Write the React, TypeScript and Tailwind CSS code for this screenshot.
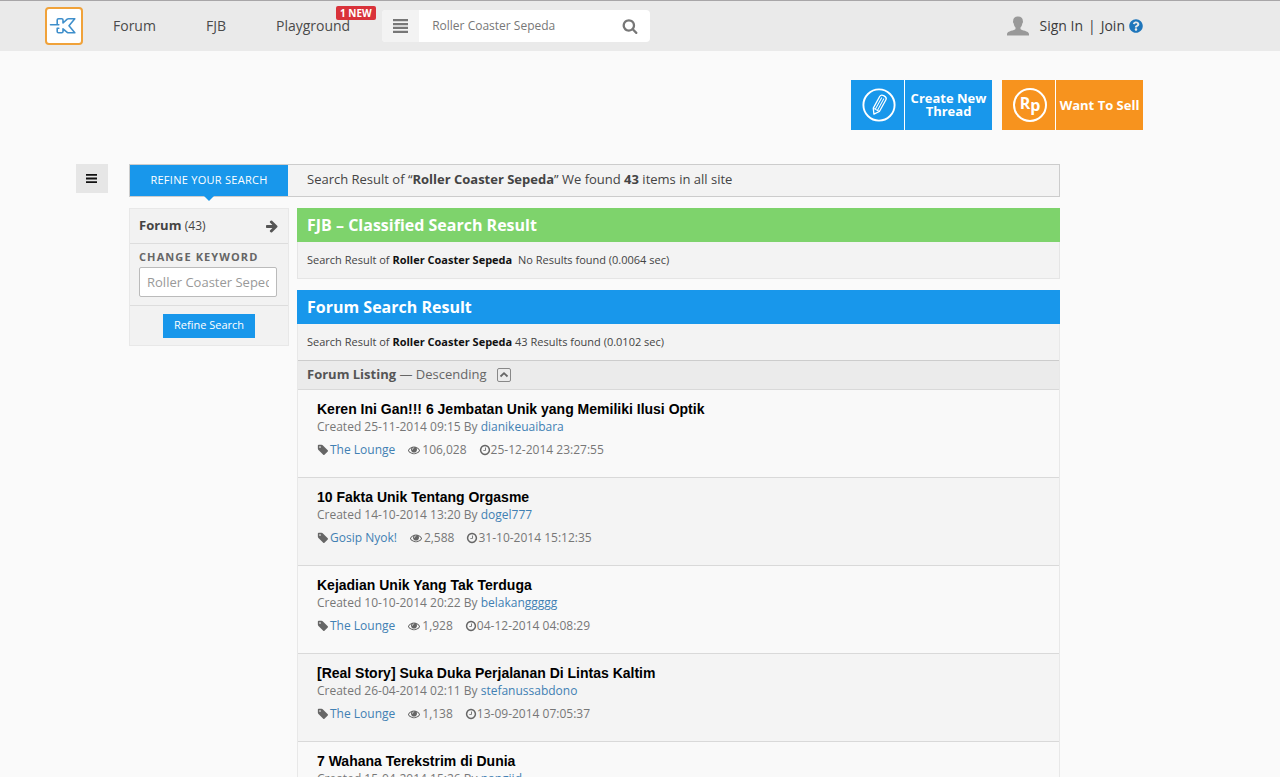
import React from "react";
import { FaQuestionCircle } from "react-icons/fa";

type IconProps = { d: string; className?: string };

function Glyph({ d, className }: IconProps) {
  return (
    <svg viewBox="0 0 1792 1792" fill="currentColor" aria-hidden="true" className={className}>
      <path d={d} />
    </svg>
  );
}

const EYE =
  "M1664 960q-152-236-381-353 61 104 61 225 0 185-131.5 316.5t-316.5 131.5-316.5-131.5-131.5-316.5q0-121 61-225-229 117-381 353 133 205 333.5 326.5t434.5 121.5 434.5-121.5 333.5-326.5zm-720-384q0-20-14-34t-34-14q-125 0-214.5 89.5t-89.5 214.5q0 20 14 34t34 14 34-14 14-34q0-86 61-147t147-61q20 0 34-14t14-34zm848 384q0 34-20 69-140 230-376.5 368.5t-499.5 138.5-499.5-139-376.5-368q-20-35-20-69t20-69q140-229 376.5-368t499.5-139 499.5 139 376.5 368q20 35 20 69z";
const CLOCK =
  "M1024 544v448q0 14-9 23t-23 9h-320q-14 0-23-9t-9-23v-64q0-14 9-23t23-9h224v-352q0-14 9-23t23-9h64q14 0 23 9t9 23zm416 352q0-148-73-273t-198-198-273-73-273 73-198 198-73 273 73 273 198 198 273 73 273-73 198-198 73-273zm224 0q0 209-103 385.5t-279.5 279.5-385.5 103-385.5-103-279.5-279.5-103-385.5 103-385.5 279.5-279.5 385.5-103 385.5 103 279.5 279.5 103 385.5z";
const TAG =
  "M576 448q0-53-37.5-90.5t-90.5-37.5-90.5 37.5-37.5 90.5 37.5 90.5 90.5 37.5 90.5-37.5 37.5-90.5zm1067 576q0 53-37 90l-491 492q-39 37-91 37-53 0-90-37l-715-716q-38-37-64.5-101t-26.5-117v-416q0-52 38-90t90-38h416q53 0 117 26.5t102 64.5l715 714q37 39 37 91z";
const ARROW =
  "M1600 960q0 54-37 91l-651 651q-39 37-91 37-51 0-90-37l-75-75q-38-38-38-91t38-91l293-293h-704q-52 0-84.5-37.5t-32.5-90.5v-128q0-53 32.5-90.5t84.5-37.5h704l-293-294q-38-36-38-90t38-90l75-75q38-38 90-38 53 0 91 38l651 651q37 35 37 90z";
const SEARCH =
  "M1216 832q0-185-131.5-316.5t-316.5-131.5-316.5 131.5-131.5 316.5 131.5 316.5 316.5 131.5 316.5-131.5 131.5-316.5zm512 832q0 52-38 90t-90 38q-54 0-90-38l-343-342q-179 124-399 124-143 0-273.5-55.5t-225-150-150-225-55.5-273.5 55.5-273.5 150-225 225-150 273.5-55.5 273.5 55.5 225 150 150 225 55.5 273.5q0 220-124 399l343 343q37 37 37 90z";

const threads = [
  { title: "Keren Ini Gan!!! 6 Jembatan Unik yang Memiliki Ilusi Optik", created: "25-11-2014 09:15", author: "dianikeuaibara", forum: "The Lounge", views: "106,028", last: "25-12-2014 23:27:55" },
  { title: "10 Fakta Unik Tentang Orgasme", created: "14-10-2014 13:20", author: "dogel777", forum: "Gosip Nyok!", views: "2,588", last: "31-10-2014 15:12:35" },
  { title: "Kejadian Unik Yang Tak Terduga", created: "10-10-2014 20:22", author: "belakanggggg", forum: "The Lounge", views: "1,928", last: "04-12-2014 04:08:29" },
  { title: "[Real Story] Suka Duka Perjalanan Di Lintas Kaltim", created: "26-04-2014 02:11", author: "stefanussabdono", forum: "The Lounge", views: "1,138", last: "13-09-2014 07:05:37" },
  { title: "7 Wahana Terekstrim di Dunia", created: "15-04-2014 15:26", author: "nangijd", forum: "The Lounge", views: "1,024", last: "20-08-2014 10:12:44" },
];

function Header() {
  return (
    <header className="flex h-[51px] items-center border-t border-[#a8a6a8] bg-[#eaeaea] pl-[45px] text-sm font-medium text-[#4a4a4a]">
      <a href="#home" aria-label="Home" className="flex size-[38px] shrink-0 items-center justify-center rounded border-2 border-[#f0a23a] bg-white">
        <svg viewBox="0 0 30 22" className="h-[22px] w-[30px]" fill="none" stroke="#3f8fcb" strokeWidth="1.6" strokeLinejoin="round" strokeLinecap="round" aria-hidden="true">
          <path d="M1.500 9.800H9.800M8.200 9.800V5Q8.200 3.700 9.500 3.700H12.700Q14 3.700 14 5V8L18.200 4.200Q18.800 3.700 19.500 3.700H25.800L20 10.800L25.800 17.800H19.500Q18.800 17.800 18.200 17.300L14 13.800V16.500Q14 17.800 12.700 17.800H9.500Q8.200 17.800 8.200 16.500V13.300H9.800" />
        </svg>
      </a>
      <nav className="flex items-center">
        <a href="#forum" className="ml-[30px]">Forum</a>
        <a href="#fjb" className="ml-[50px]">FJB</a>
        <a href="#playground" className="relative ml-[50px]">
          Playground
          <span className="absolute -top-2.5 left-[60px] rounded-xs bg-[#d9323a] px-1 text-[10px] leading-[14px] font-bold whitespace-nowrap text-white">1 NEW</span>
        </a>
      </nav>
      <form className="ml-8 flex h-8 w-[268px] shrink-0 overflow-hidden rounded bg-white" onSubmit={(e) => e.preventDefault()}>
        <button type="button" aria-label="Categories" className="flex w-[37px] items-center justify-center bg-[#f3f3f3]">
          <svg viewBox="0 0 15 14" className="h-3.5 w-[15px]" fill="#777" aria-hidden="true">
            <path d="M0 0h15v2.300H0zM0 3.900h15v2.300H0zM0 7.800h15v2.300H0zM0 11.700h15v2.300H0z" />
          </svg>
        </button>
        <input type="text" aria-label="Search" defaultValue="Roller Coaster Sepeda" className="min-w-0 flex-1 px-[13px] text-xs font-normal text-[#777] outline-none" />
        <button type="submit" aria-label="Search" className="flex w-10 items-center justify-center text-[#777]">
          <Glyph d={SEARCH} className="size-4" />
        </button>
      </form>
      <div className="mr-[137px] ml-auto flex items-center whitespace-nowrap text-[#3c3c3c]">
        <svg viewBox="0 0 22 20" className="mr-2.5 h-5 w-[22px]" fill="#999" aria-hidden="true">
          <path d="M11 0.500C7.500 0.500 6 2.500 6.200 5C5.800 5.500 6 7 6.700 7.500C7 9.500 7.600 10.500 8.500 11.500V13C8 14.500 0 14.800 0 18V19.500H22V18C22 14.800 14 14.500 13.500 13V11.500C14.400 10.500 15 9.500 15.300 7.500C16 7 16.200 5.500 15.800 5C16 2.500 14.500 0.500 11 0.500Z" />
        </svg>
        <a href="#signin">Sign In</a>
        <span className="mx-[5px]">|</span>
        <a href="#join">Join</a>
        <a href="#help" aria-label="Help" className="ml-1 text-[#1f76bb]"><FaQuestionCircle className="size-3.5" /></a>
      </div>
    </header>
  );
}

function Actions() {
  return (
    <div className="mr-[137px] flex justify-end gap-2.5 pt-[29px] text-[13px] leading-[13px] font-bold text-white">
      <button className="flex h-[50px] w-[141px]">
        <span className="flex h-full w-[54px] items-center justify-center border-r border-white bg-[#1897eb] pl-[3px]">
          <svg viewBox="0 0 34 34" className="size-[34px]" fill="none" stroke="#fff" aria-hidden="true">
            <circle cx="17" cy="17" r="15.600" strokeWidth="1.900" />
            <g transform="rotate(29 17 17)" strokeWidth="1.300" strokeLinejoin="round">
              <path d="M13.500 22.500V9Q13.500 6.500 17 6.500T20.500 9V22.500L17 27.500Z" />
              <path d="M15.800 9V22.500M18.200 9V22.500M13.500 22.500H20.500" strokeWidth="1" />
            </g>
          </svg>
        </span>
        <span className="flex h-full flex-1 items-center justify-center bg-[#1897eb]">Create New<br />Thread</span>
      </button>
      <button className="flex h-[50px] w-[141px]">
        <span className="flex h-full w-[54px] items-center justify-center border-r border-white bg-[#f7931e] pl-[3px]">
          <span className="flex size-[34px] items-center justify-center rounded-full border-2 border-white pb-1 text-base">R<span className="pt-1">p</span></span>
        </span>
        <span className="flex h-full flex-1 items-center justify-center bg-[#f7931e] whitespace-nowrap">Want To Sell</span>
      </button>
    </div>
  );
}

function Sidebar() {
  return (
    <form className="w-[160px] shrink-0 self-start border border-[#e8e8e8] bg-[#f2f2f2]" onSubmit={(e) => e.preventDefault()}>
      <div className="flex h-[35px] items-center justify-between border-b border-[#ddd] px-[9px] text-[13px] text-[#444]">
        <span><b>Forum</b> <span className="text-xs">(43)</span></span>
        <Glyph d={ARROW} className="size-3.5 text-[#555]" />
      </div>
      <div className="h-[62px] border-b border-[#ddd] pt-[5px] pr-[11px] pl-[9px]">
        <label htmlFor="keyword" className="block text-[11px] leading-4 font-bold tracking-widest text-[#666]">CHANGE KEYWORD</label>
        <input id="keyword" type="text" defaultValue="Roller Coaster Sepeda" className="mt-0.5 h-[30px] w-full rounded-xs border border-[#bbb] bg-white px-[7px] text-[13px] text-[#999] outline-none" />
      </div>
      <div className="flex h-[39px] items-center justify-center">
        <button type="submit" className="h-6 w-[92px] bg-[#1897eb] text-[11px] font-medium text-white">Refine Search</button>
      </div>
    </form>
  );
}

function Results() {
  return (
    <main className="min-w-0 flex-1">
      <section>
        <h2 className="flex h-[34px] items-center bg-[#7ed36c] px-2.5 text-base font-bold text-white">FJB – Classified Search Result</h2>
        <p className="flex h-[37px] items-center border border-t-0 border-[#e5e5e5] bg-[#f3f3f3] px-[9px] text-[11px] whitespace-pre text-[#444]">
          <span>Search Result of <b className="text-[#111]">Roller Coaster Sepeda</b>{"  "}No Results found (0.0064 sec)</span>
        </p>
      </section>
      <section className="mt-[11px]">
        <h2 className="flex h-[34px] items-center bg-[#1897eb] px-2.5 text-base font-bold text-white">Forum Search Result</h2>
        <div className="border-x border-[#e8e8e8]">
          <p className="flex h-9 items-center bg-[#f3f3f3] px-[9px] text-[11px] whitespace-pre text-[#444]">
            <span>Search Result of <b className="text-[#111]">Roller Coaster Sepeda</b> 43 Results found (0.0102 sec)</span>
          </p>
          <div className="flex h-[29px] items-center border-t border-[#ccc] bg-[#ebebeb] px-[9px] text-[13px] text-[#666]">
            <span><b className="text-[#555]">Forum Listing</b> — Descending</span>
            <button aria-label="Sort ascending" className="ml-2.5 flex size-3.5 items-center justify-center rounded-xs border border-[#888]">
              <svg viewBox="0 0 10 10" className="size-2.5" fill="none" stroke="#666" strokeWidth="1.800" aria-hidden="true"><path d="M1.500 6.500L5 3.200L8.500 6.500" /></svg>
            </button>
          </div>
          <ul>
            {threads.map((t) => (
              <li key={t.title} className="h-[88px] border-t border-[#d9d9d9] px-[19px] pt-2.5 text-xs text-[#777] odd:bg-[#f9f9f9] even:bg-[#f4f4f4]">
                <h3 className="font-['Liberation_Sans',Arial,sans-serif] text-sm leading-[18px] font-bold text-black"><a href="#thread">{t.title}</a></h3>
                <p className="leading-[18px]">Created {t.created} By <a href="#user" className="text-[#4180b3]">{t.author}</a></p>
                <p className="mt-[5px] flex items-center leading-[18px]">
                  <Glyph d={TAG} className="mr-px size-3 text-[#666]" />
                  <a href="#category" className="text-[#4180b3]">{t.forum}</a>
                  <Glyph d={EYE} className="mr-0.5 ml-[13px] size-3 text-[#666]" />
                  {t.views}
                  <Glyph d={CLOCK} className="ml-3 size-3 text-[#666]" />
                  {t.last}
                </p>
              </li>
            ))}
          </ul>
        </div>
      </section>
    </main>
  );
}

export default function App() {
  return (
    <div className="h-screen overflow-hidden bg-[#fafafa] font-['Open_Sans',sans-serif]">
      <Header />
      <Actions />
      <div className="mt-[34px] mr-[220px] ml-[76px] flex items-start">
        <button aria-label="Menu" className="mr-[21px] flex h-[29px] w-8 shrink-0 items-center justify-center bg-[#e6e6e6]">
          <svg viewBox="0 0 12 9" className="h-[9px] w-3" fill="#111" aria-hidden="true"><path d="M0 0h11v1.800H0zM0 3.600h11v1.800H0zM0 7.200h11v1.800H0z" /></svg>
        </button>
        <div className="min-w-0 flex-1">
          <div className="flex h-[33px] border border-[#ccc] bg-[#f3f3f3] text-[13px] text-[#444]">
            <div className="relative flex w-[158px] shrink-0 items-center justify-center bg-[#1897eb] text-[11px] font-medium tracking-wide text-white">
              REFINE YOUR SEARCH
              <svg viewBox="0 0 10 5" className="absolute top-full left-[74px] h-[5px] w-2.5" fill="#1897eb" aria-hidden="true"><path d="M0 0h10L5 5z" /></svg>
            </div>
            <p className="px-[19px] leading-[29px]">Search Result of “<b>Roller Coaster Sepeda</b>” We found <b>43</b> items in all site</p>
          </div>
          <div className="mt-[11px] flex gap-2">
            <Sidebar />
            <Results />
          </div>
        </div>
      </div>
    </div>
  );
}
